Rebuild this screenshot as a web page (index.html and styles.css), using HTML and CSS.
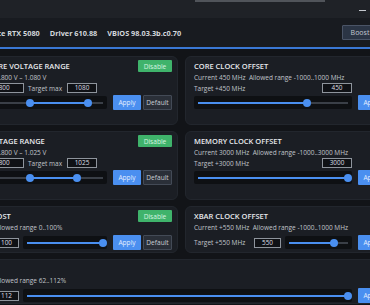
FILE: index.html
```html
<!DOCTYPE html>
<html lang="en">
<head>
    <meta charset="UTF-8">
    <meta name="viewport" content="width=device-width, initial-scale=1.0">
    <title>GPU Tuner</title>
    <link rel="stylesheet" href="styles.css">
</head>
<body>

<div class="window">
    <!-- Barra de titulo -->
    <div class="titlebar">
        <div class="topline"><div class="topline-thumb"></div></div>
        <div class="win-controls">
            <span class="ctl ctl-min"></span>
            <span class="ctl ctl-max"></span>
            <span class="ctl ctl-close"></span>
        </div>
    </div>

    <!-- Info da placa -->
    <div class="header">
        <span>NVIDIA GeForce RTX 5080</span>
        <span>Driver 610.88</span>
        <span>VBIOS 98.03.3b.c0.70</span>
        <button class="btn-boost">Boost</button>
    </div>

    <div class="cards">
        <!-- linha 1 -->
        <section class="card">
            <div class="card-head"><h2>GRAPHICS CORE VOLTAGE RANGE</h2><button class="btn-green">Disable</button></div>
            <p class="desc">Allowed range: 0.800 V – 1.080 V</p>
            <div class="fields">
                <span class="lbl lbl-min">Min</span>
                <span class="field field-wide">0.800</span>
                <span class="lbl lbl-max">Target max</span>
                <span class="field">1080</span>
            </div>
            <div class="control">
                <div class="slider"><div class="track">
                    <div class="fill" style="left:51%;width:39%"></div>
                    <span class="knob" style="left:51%"></span>
                    <span class="knob" style="left:90%"></span>
                </div></div>
            </div>
            <div class="actions"><button class="btn-blue">Apply</button><button class="btn-dark">Default</button></div>
        </section>

        <section class="card">
            <div class="card-head"><h2>CORE CLOCK OFFSET</h2></div>
            <p class="desc">Current 450 MHz&nbsp; Allowed range -1000..1000 MHz</p>
            <div class="fields fields-split">
                <span class="lbl">Target +450 MHz</span>
                <span class="field">450</span>
            </div>
            <div class="control">
                <div class="slider"><div class="track">
                    <div class="fill" style="left:0;width:72.7%"></div>
                    <span class="knob" style="left:72.7%"></span>
                </div></div>
            </div>
            <div class="actions"><button class="btn-blue">Apply</button><button class="btn-dark">Default</button></div>
        </section>

        <!-- linha 2 -->
        <section class="card">
            <div class="card-head"><h2>MEMORY VOLTAGE RANGE</h2><button class="btn-green">Disable</button></div>
            <p class="desc">Allowed range: 0.800 V – 1.025 V</p>
            <div class="fields">
                <span class="lbl lbl-min">Min</span>
                <span class="field field-wide">0.800</span>
                <span class="lbl lbl-max">Target max</span>
                <span class="field">1025</span>
            </div>
            <div class="control">
                <div class="slider"><div class="track">
                    <div class="fill" style="left:51%;width:31.7%"></div>
                    <span class="knob" style="left:51%"></span>
                    <span class="knob" style="left:82.7%"></span>
                </div></div>
            </div>
            <div class="actions"><button class="btn-blue">Apply</button><button class="btn-dark">Default</button></div>
        </section>

        <section class="card">
            <div class="card-head"><h2>MEMORY CLOCK OFFSET</h2></div>
            <p class="desc">Current 3000 MHz&nbsp; Allowed range -1000..3000 MHz</p>
            <div class="fields fields-split">
                <span class="lbl">Target +3000 MHz</span>
                <span class="field">3000</span>
            </div>
            <div class="control">
                <div class="slider"><div class="track">
                    <div class="fill" style="left:0;width:100%"></div>
                    <span class="knob" style="left:100%"></span>
                </div></div>
            </div>
            <div class="actions"><button class="btn-blue">Apply</button><button class="btn-dark">Default</button></div>
        </section>

        <!-- linha 3 -->
        <section class="card">
            <div class="card-head"><h2>DYNAMIC BOOST</h2><button class="btn-green">Disable</button></div>
            <p class="desc">Current 100%&nbsp; Allowed range 0..100%</p>
            <div class="control control-inline">
                <span class="lbl lbl-target">Target</span>
                <span class="field field-sm">100</span>
                <div class="slider"><div class="track">
                    <div class="fill" style="left:0;width:100%"></div>
                    <span class="knob" style="left:100%"></span>
                </div></div>
            </div>
            <div class="actions actions-inline"><button class="btn-blue">Apply</button><button class="btn-dark">Default</button></div>
        </section>

        <section class="card">
            <div class="card-head"><h2>XBAR CLOCK OFFSET</h2></div>
            <p class="desc">Current +550 MHz&nbsp; Allowed range -1000..1000 MHz</p>
            <div class="control control-inline">
                <span class="lbl lbl-xbar">Target +550 MHz</span>
                <span class="field field-md">550</span>
                <div class="slider"><div class="track">
                    <div class="fill" style="left:0;width:76%"></div>
                    <span class="knob" style="left:76%"></span>
                </div></div>
            </div>
            <div class="actions actions-inline"><button class="btn-blue">Apply</button><button class="btn-dark">Default</button></div>
        </section>

        <!-- linha 4 -->
        <section class="card card-wide">
            <div class="card-head"><h2>POWER LIMIT</h2></div>
            <p class="desc">Current 112%&nbsp; Allowed range 62..112%</p>
            <div class="control control-inline">
                <span class="lbl lbl-target">Target</span>
                <span class="field field-sm">112</span>
                <div class="slider"><div class="track">
                    <div class="fill" style="left:0;width:100%"></div>
                    <span class="knob" style="left:100%"></span>
                </div></div>
            </div>
            <div class="actions actions-inline"><button class="btn-blue">Apply</button><button class="btn-dark">Default</button></div>
        </section>
    </div>
</div>

</body>
</html>
```

FILE: styles.css
```css
body {
    margin: 0;
    background-color: #121418;
    font-family: "Open Sans", "Noto Sans", sans-serif;
    color: #d0d4da;
    overflow: hidden;
}
button {
    font-family: inherit;
    padding: 0;
    cursor: pointer;
}
.window {
    width: 497px;
    margin-left: -67px;
}

/* barra de titulo */
.titlebar {
    height: 18px;
    display: flex;
    flex-direction: column;
    background-color: #1f2227;
}
.topline {
    height: 2px;
    display: flex;
}
.topline-thumb {
    margin-left: 262px;
    width: 130px;
    background-color: #50545a;
}
.win-controls {
    flex: 1;
    display: flex;
    justify-content: flex-end;
    align-items: center;
}
.ctl {
    width: 27px;
    height: 10px;
    display: flex;
    justify-content: center;
    align-items: center;
}
.ctl::before {
    content: "";
    display: block;
    width: 7px;
    height: 1px;
    background-color: #c4c8ce;
}

/* cabecalho */
.header {
    height: 29px;
    display: flex;
    align-items: center;
    gap: 10px;
    padding: 0 52px 0 15px;
    background-color: #181b20;
    border-bottom: 2px solid #3a78d4;
    font-size: 7.3px;
    font-weight: 700;
    color: #d3d7dc;
}
.btn-boost {
    margin-left: auto;
    width: 36px;
    height: 15px;
    background-color: #2b3545;
    border: 1px solid #4a5466;
    border-radius: 1px;
    color: #c3c8d0;
    font-size: 7px;
}

/* grade de cards */
.cards {
    display: grid;
    grid-template-columns: 238px 238px;
    grid-template-rows: 69px 69px 47px auto;
    gap: 6px 7px;
    padding: 7px;
}
.card {
    display: grid;
    grid-template-columns: 1fr 59px;
    column-gap: 6px;
    align-content: start;
    padding: 3px 5px 0 8px;
    background-color: #1b1e24;
    border: 1px solid #22262d;
    border-radius: 6px;
}
.card-wide {
    grid-column: 1 / -1;
}
.card-head {
    grid-column: 1 / -1;
    height: 12px;
    display: flex;
    align-items: center;
    justify-content: space-between;
}
.card-head h2 {
    margin: 0;
    font-size: 7.5px;
    font-weight: 600;
    color: #e8eaed;
    white-space: nowrap;
}
.desc {
    grid-column: 1 / -1;
    margin: 1px 0 0;
    font-size: 6.5px;
    line-height: 9px;
    color: #c0c4ca;
    white-space: nowrap;
}
.fields {
    grid-column: 1;
    margin-top: 1px;
    height: 10px;
    display: flex;
    align-items: center;
    gap: 4px;
}
.fields-split {
    justify-content: space-between;
}
.lbl {
    font-size: 6.5px;
    color: #c0c4ca;
    white-space: nowrap;
}
.lbl-min { width: 26px; }
.lbl-max { width: 35px; }
.lbl-target { width: 41px; }
.lbl-xbar { width: 56px; }
.field {
    box-sizing: border-box;
    width: 30px;
    height: 10px;
    border: 1px solid #8e949c;
    background-color: #0f1115;
    font-size: 6.4px;
    line-height: 8px;
    text-align: center;
    color: #dcdfe3;
}
.field-wide { width: 45px; }
.field-sm { width: 25px; }
.field-md { width: 27px; }

.control {
    grid-column: 1;
    margin-top: 2px;
    height: 15px;
    display: flex;
    align-items: center;
    gap: 4px;
}
.control-inline {
    margin-top: 3px;
}
.actions {
    grid-column: 2;
    margin-top: 2px;
    display: flex;
    gap: 2px;
}
.actions-inline {
    margin-top: 3px;
}
.slider {
    flex: 1;
    height: 13px;
    display: flex;
    align-items: center;
    padding: 0 4px;
    background-color: #0e1013;
    border-radius: 2px;
}
.track {
    position: relative;
    flex: 1;
    height: 2px;
    background-color: #3a3f47;
}
.fill {
    position: absolute;
    top: 0;
    height: 100%;
    background-color: #4a8ff0;
}
.knob {
    position: absolute;
    top: 50%;
    width: 8px;
    height: 8px;
    margin: -4px 0 0 -4px;
    border-radius: 50%;
    background-color: #4a8ff0;
}

/* botoes */
.btn-green {
    width: 34px;
    height: 12px;
    border: none;
    border-radius: 1px;
    background-color: #3fb36b;
    color: #d8f3e2;
    font-size: 6.6px;
}
.btn-blue {
    width: 28px;
    height: 15px;
    border: none;
    border-radius: 1px;
    background-color: #4a8ff0;
    color: #e4eeff;
    font-size: 6.6px;
}
.btn-dark {
    width: 29px;
    height: 15px;
    border: 1px solid #434a56;
    border-radius: 1px;
    background-color: #2a2f38;
    color: #c9cdd3;
    font-size: 6.6px;
}
```
